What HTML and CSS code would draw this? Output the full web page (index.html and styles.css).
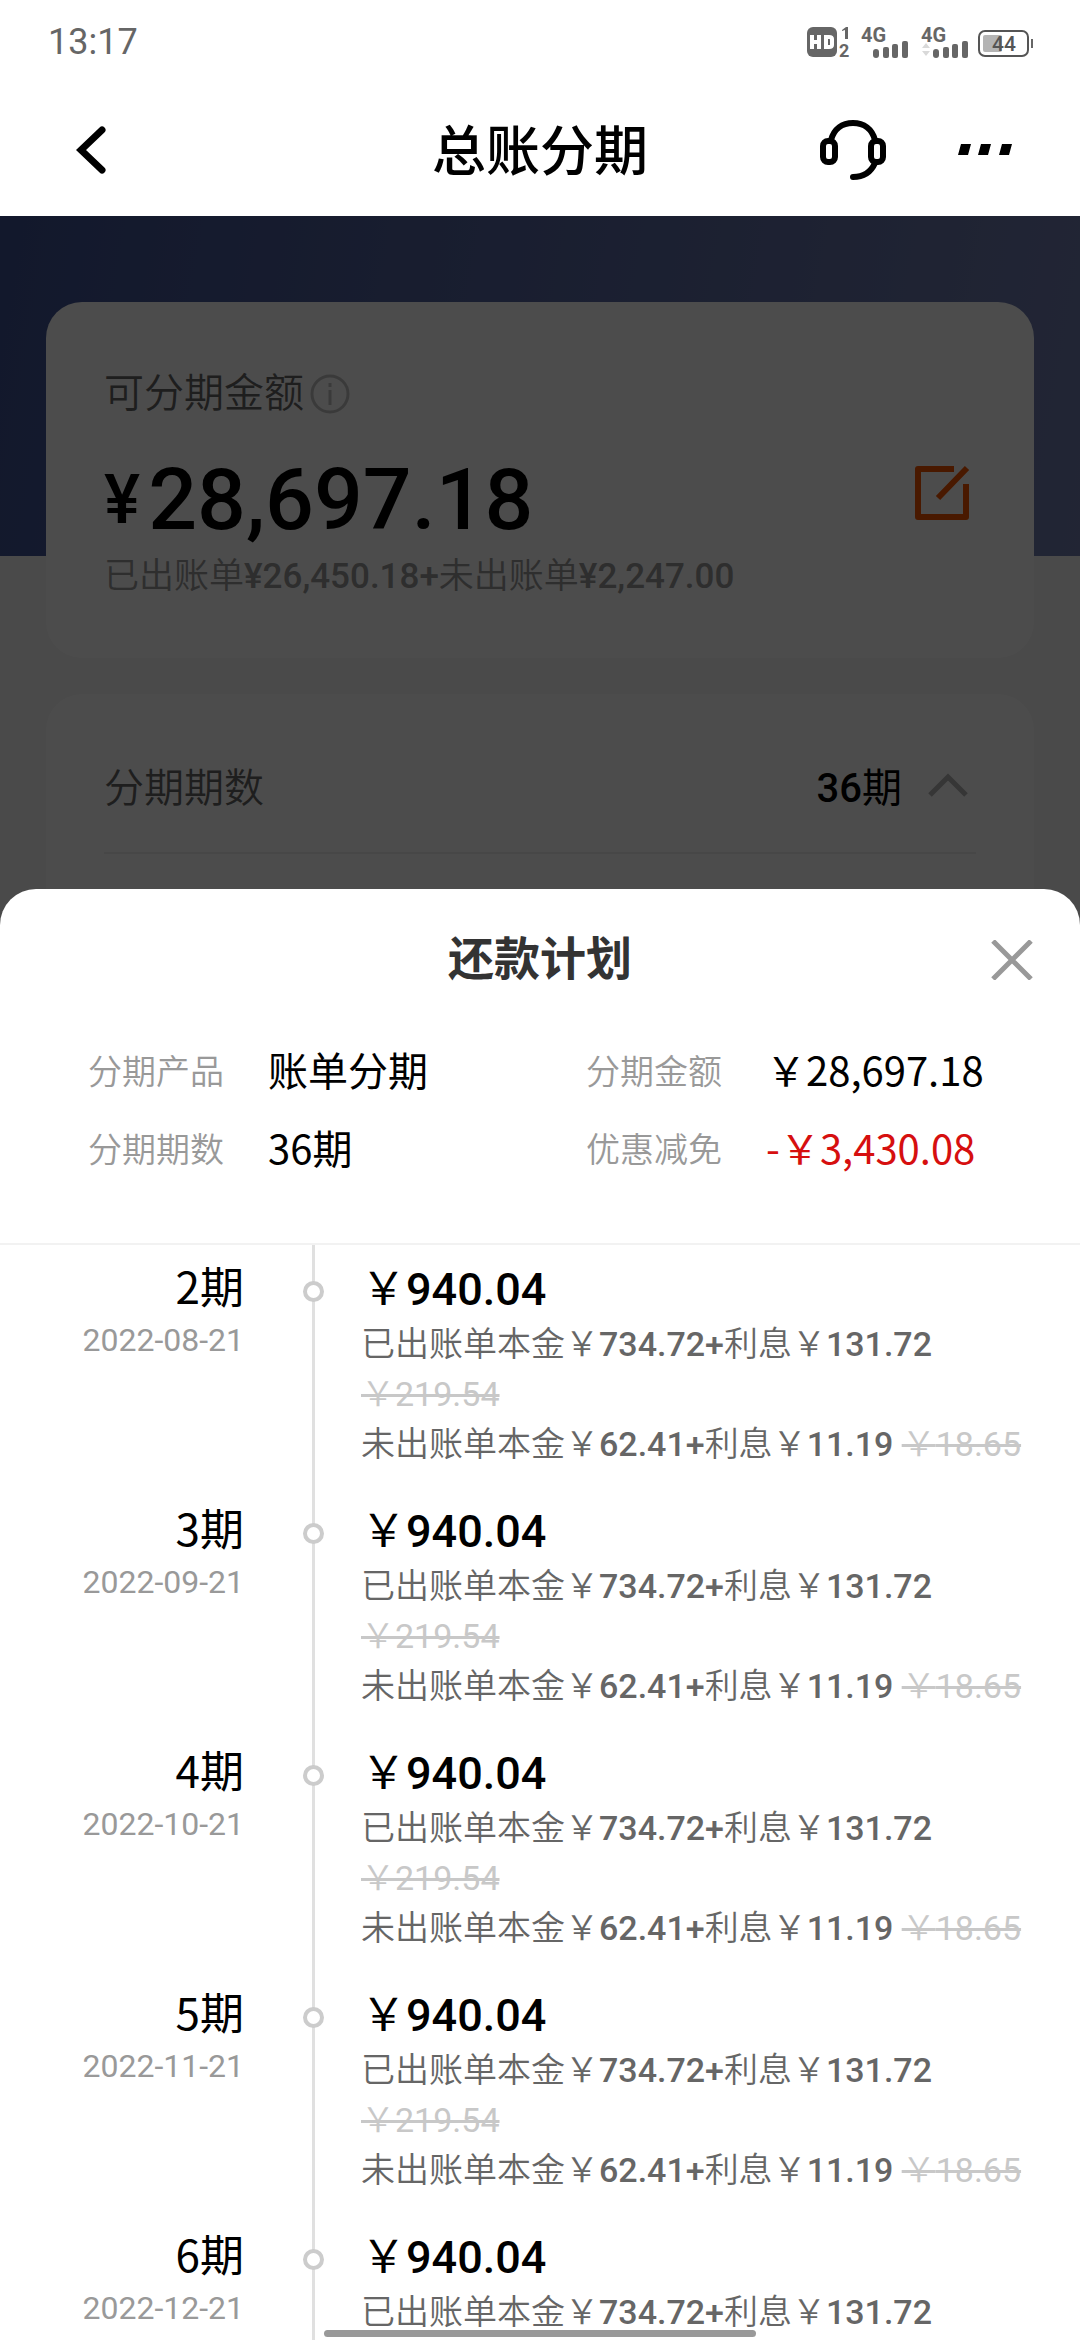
FILE: index.html
```html
<!DOCTYPE html>
<html lang="zh-CN">
<head>
<meta charset="utf-8">
<meta name="viewport" content="width=device-width, initial-scale=1">
<title>总账分期</title>
<link rel="stylesheet" href="styles.css">
</head>
<body>
<div class="app">
  <header class="top">
    <div class="status">
      <time class="clock">13:17</time>
      <svg class="status-icons" width="230" height="54" viewBox="805 15 230 54" aria-hidden="true">
        <g fill="#666">
          <rect x="807" y="27" width="30" height="30" rx="6"/>
          <path d="M842 30l4-3h2v12h-3v-9l-3 1z"/>
          <text x="839" y="57" font-size="18" font-weight="700">2</text>
          <text x="861" y="42" font-size="20" font-weight="700">4G</text>
          <text x="921" y="42" font-size="20" font-weight="700">4G</text>
          <rect x="873" y="49" width="6" height="9" rx="3"/>
          <rect x="883" y="47" width="6" height="11" rx="2"/>
          <rect x="892" y="44" width="6" height="14" rx="2"/>
          <rect x="902" y="41" width="6" height="17" rx="2"/>
          <rect x="933" y="49" width="6" height="9" rx="3"/>
          <rect x="943" y="47" width="6" height="11" rx="2"/>
          <rect x="952" y="44" width="6" height="14" rx="2"/>
          <rect x="962" y="41" width="6" height="17" rx="2"/>
          <rect x="1031" y="39" width="2" height="9"/>
        </g>
        <path d="M812 35v14M819 35v14M812 42h7M826 37v10h3q3 0 3-2v-6q0-2-3-2z" fill="none" stroke="#fff" stroke-width="4"/>
        <path d="M922 48l4-5 4 5zM922 51h8l-4 5z" fill="#d9d9d9"/>
        <rect x="979" y="31" width="49" height="25" rx="6" fill="none" stroke="#555" stroke-width="2"/>
        <rect x="983" y="35" width="19" height="17" rx="2" fill="#b4b4b4"/>
        <text x="992" y="51" font-size="21" font-weight="500" fill="#555">44</text>
      </svg>
    </div>
    <nav class="nav">
      <button class="icon-btn back" aria-label="返回">
        <svg width="30" height="48" viewBox="0 0 30 48"><path d="M26 4L5 24l21 20" fill="none" stroke="#000" stroke-width="7" stroke-linecap="round"/></svg>
      </button>
      <h1>总账分期</h1>
      <div class="nav-actions">
        <button class="icon-btn" aria-label="客服">
          <svg width="66" height="60" viewBox="0 0 66 60" fill="none" stroke="#000" stroke-width="6" stroke-linecap="round">
            <rect x="3" y="21" width="12" height="21" rx="5"/>
            <rect x="51" y="21" width="12" height="21" rx="5"/>
            <path d="M11 20C14 9 22 3 33 3s19 6 22 17M55 43c-4 9-12 14-22 14"/>
          </svg>
        </button>
        <button class="icon-btn" aria-label="更多">
          <svg width="54" height="12" viewBox="0 0 54 12"><path d="M3 0h10l-3 11H0zM23 0h10l-3 11H20zM44 0h10l-3 11H41z"/></svg>
        </button>
      </div>
    </nav>
  </header>

  <main class="page">
    <section class="card amount-card">
      <div class="amount-info">
        <div class="label">可分期金额
          <svg width="40" height="40" viewBox="0 0 40 40" fill="none" stroke="#c4c4c4" stroke-width="3"><circle cx="20" cy="20" r="18"/><path d="M20 16v15M20 9v4"/></svg>
        </div>
        <div class="amount"><span class="yen">¥</span><span>28,697.18</span></div>
        <div class="breakdown">已出账单<span class="num">¥26,450.18+</span>未出账单<span class="num">¥2,247.00</span></div>
      </div>
      <button class="icon-btn edit" aria-label="修改金额">
        <svg width="56" height="56" viewBox="0 0 56 56" fill="none" stroke="#f65600" stroke-width="6" stroke-linejoin="round"><path d="M40 4H4v48h48V19M24 33L53 3"/></svg>
      </button>
    </section>
    <section class="card term-card">
      <button class="term-row">
        <span class="term-label">分期期数</span>
        <span class="term-value"><span class="num">36</span>期</span>
        <svg width="40" height="24" viewBox="0 0 40 24"><path d="M2 22L20 4l18 18" fill="none" stroke="#b4b4b4" stroke-width="5"/></svg>
      </button>
    </section>
  </main>

  <div class="backdrop"></div>

  <section class="sheet" role="dialog" aria-labelledby="sheet-title">
    <header class="sheet-head">
      <h2 id="sheet-title">还款计划</h2>
      <button class="icon-btn close" aria-label="关闭">
        <svg width="42" height="40" viewBox="0 0 42 40"><path d="M2 1l38 38M40 1L2 39" stroke="#999" stroke-width="5"/></svg>
      </button>
    </header>
    <dl class="summary">
      <div><dt>分期产品</dt><dd>账单分期</dd></div>
      <div><dt>分期金额</dt><dd>￥28,697.18</dd></div>
      <div><dt>分期期数</dt><dd>36期</dd></div>
      <div><dt>优惠减免</dt><dd class="discount">-￥3,430.08</dd></div>
    </dl>
    <ol class="plan">
      <li class="item">
        <div class="when"><span class="term">2期</span><time class="date">2022-08-21</time></div>
        <div class="rail"><i class="dot"></i></div>
        <div class="detail">
          <p class="total">￥<span class="num">940.04</span></p>
          <p>已出账单本金￥<span class="num">734.72+</span>利息￥<span class="num">131.72</span> <del>￥<span class="num">219.54</span></del></p>
          <p>未出账单本金￥<span class="num">62.41+</span>利息￥<span class="num">11.19</span> <del>￥<span class="num">18.65</span></del></p>
        </div>
      </li>
      <li class="item">
        <div class="when"><span class="term">3期</span><time class="date">2022-09-21</time></div>
        <div class="rail"><i class="dot"></i></div>
        <div class="detail">
          <p class="total">￥<span class="num">940.04</span></p>
          <p>已出账单本金￥<span class="num">734.72+</span>利息￥<span class="num">131.72</span> <del>￥<span class="num">219.54</span></del></p>
          <p>未出账单本金￥<span class="num">62.41+</span>利息￥<span class="num">11.19</span> <del>￥<span class="num">18.65</span></del></p>
        </div>
      </li>
      <li class="item">
        <div class="when"><span class="term">4期</span><time class="date">2022-10-21</time></div>
        <div class="rail"><i class="dot"></i></div>
        <div class="detail">
          <p class="total">￥<span class="num">940.04</span></p>
          <p>已出账单本金￥<span class="num">734.72+</span>利息￥<span class="num">131.72</span> <del>￥<span class="num">219.54</span></del></p>
          <p>未出账单本金￥<span class="num">62.41+</span>利息￥<span class="num">11.19</span> <del>￥<span class="num">18.65</span></del></p>
        </div>
      </li>
      <li class="item">
        <div class="when"><span class="term">5期</span><time class="date">2022-11-21</time></div>
        <div class="rail"><i class="dot"></i></div>
        <div class="detail">
          <p class="total">￥<span class="num">940.04</span></p>
          <p>已出账单本金￥<span class="num">734.72+</span>利息￥<span class="num">131.72</span> <del>￥<span class="num">219.54</span></del></p>
          <p>未出账单本金￥<span class="num">62.41+</span>利息￥<span class="num">11.19</span> <del>￥<span class="num">18.65</span></del></p>
        </div>
      </li>
      <li class="item">
        <div class="when"><span class="term">6期</span><time class="date">2022-12-21</time></div>
        <div class="rail"><i class="dot"></i></div>
        <div class="detail">
          <p class="total">￥<span class="num">940.04</span></p>
          <p>已出账单本金￥<span class="num">734.72+</span>利息￥<span class="num">131.72</span></p>
        </div>
      </li>
    </ol>
  </section>
  <div class="home-bar"></div>
</div>
</body>
</html>
```
FILE: styles.css
```css
* { box-sizing: border-box; margin: 0; padding: 0; }

body {
  font-family: Roboto, "Noto Sans CJK SC", sans-serif;
  color: #000;
  background: #fff;
}

.app {
  position: relative;
  display: flex;
  flex-direction: column;
  height: 100vh;
  overflow: hidden;
}

.num { font-family: Roboto, sans-serif; font-weight: 500; }

.icon-btn {
  display: flex;
  border: 0;
  background: none;
}

/* Status bar and navigation */
.top { background: #fff; }

.status {
  display: flex;
  align-items: center;
  justify-content: space-between;
  height: 84px;
  padding: 0 45px 0 48px;
}

.clock { font-size: 36px; color: #666; }

.nav {
  display: grid;
  grid-template-columns: 1fr auto 1fr;
  align-items: center;
  height: 132px;
  padding: 0 68px;
}

.back { padding-left: 8px; }

.nav h1 {
  padding-top: 6px;
  font-size: 54px;
  font-weight: 500;
  line-height: 80px;
}

.nav-actions {
  display: flex;
  align-items: center;
  justify-content: flex-end;
  gap: 72px;
}

/* Page behind the sheet */
.page {
  flex: 1;
  display: flex;
  flex-direction: column;
  gap: 36px;
  padding: 86px 46px 0;
  background: linear-gradient(100deg, #3e5294, #727eb0) top / 100% 340px no-repeat #f7f7f7;
}

.card { background: #fff; border-radius: 36px; }

.amount-card {
  display: flex;
  align-items: center;
  justify-content: space-between;
  padding: 62px 64px 56px 58px;
}

.label {
  display: flex;
  align-items: center;
  gap: 6px;
  font-size: 40px;
  font-weight: 350;
  line-height: 60px;
  color: #666;
}

.amount {
  display: flex;
  align-items: center;
  gap: 8px;
  margin-top: 26px;
  font-size: 86px;
  font-weight: 500;
  line-height: 100px;
}

.yen { font-size: 68px; }

.breakdown { padding-top: 2px; font-size: 35px; font-weight: 350; line-height: 50px; color: #999; }

.edit { padding-top: 20px; }

.term-card { flex: 1; padding: 0 58px; }

.term-row {
  display: flex;
  align-items: center;
  width: 100%;
  height: 160px;
  padding: 24px 8px 0 0;
  border: 0;
  border-bottom: 2px solid #eee;
  background: none;
  font: inherit;
  font-size: 40px;
}

.term-label { font-weight: 350; color: #666; }
.term-value { margin-left: auto; margin-right: 26px; color: #000; }

.backdrop {
  position: absolute;
  inset: 216px 0 0;
  background: rgba(0, 0, 0, 0.7);
}

/* Repayment plan sheet */
.sheet {
  position: absolute;
  inset: auto 0 0;
  display: flex;
  flex-direction: column;
  height: 62vh;
  border-radius: 36px 36px 0 0;
  background: #fff;
  overflow: hidden;
}

.sheet-head {
  display: grid;
  grid-template-columns: 1fr auto 1fr;
  align-items: center;
  height: 142px;
  padding: 0 47px;
}

.sheet-head h2 {
  grid-column: 2;
  font-size: 46px;
  font-weight: 700;
  line-height: 60px;
  padding-bottom: 2px;
  color: #333;
}

.close { justify-self: end; }

.summary {
  display: grid;
  grid-template-columns: 498fr 446fr;
  row-gap: 18px;
  padding: 8px 48px 66px 88px;
  border-bottom: 2px solid #f2f2f2;
  font-family: "Noto Sans CJK SC", sans-serif;
}

.summary div { display: flex; align-items: center; gap: 44px; }
.summary dt { padding-top: 2px; font-size: 34px; font-weight: 350; line-height: 58px; color: #999; }
.summary dd { font-size: 40px; line-height: 60px; white-space: nowrap; }
.summary .discount { color: #d60f0f; }

.plan { flex: 1; list-style: none; overflow: hidden; }

.item {
  display: grid;
  grid-template-columns: 244px 138px 1fr;
  min-height: 242px;
}

.when { padding-top: 10px; text-align: right; }

.term {
  display: block;
  font-family: "Noto Sans CJK SC", sans-serif;
  font-size: 44px;
  line-height: 60px;
}

.date {
  display: block;
  font-size: 32px;
  line-height: 50px;
  color: #999;
}

.rail {
  width: 138px;
  padding-top: 36px;
  background: linear-gradient(#e0e0e0, #e0e0e0) center / 3px 100% no-repeat;
}

.dot {
  display: block;
  width: 21px;
  height: 21px;
  margin: 0 auto;
  border: 4px solid #ccc;
  border-radius: 50%;
  background: #fff;
}

.detail {
  margin-left: -21px;
  padding: 16px 40px 18px 0;
  font-size: 34px;
  font-weight: 350;
  line-height: 50px;
  color: #666;
}

.total { font-size: 45px; font-weight: 400; line-height: 58px; color: #000; }

.detail del { color: #c8c8c8; }
.detail del .num { font-weight: 400; }

.home-bar {
  position: absolute;
  bottom: 3px;
  left: 30%;
  width: 40%;
  height: 7px;
  border-radius: 4px;
  background: #999;
}
```
